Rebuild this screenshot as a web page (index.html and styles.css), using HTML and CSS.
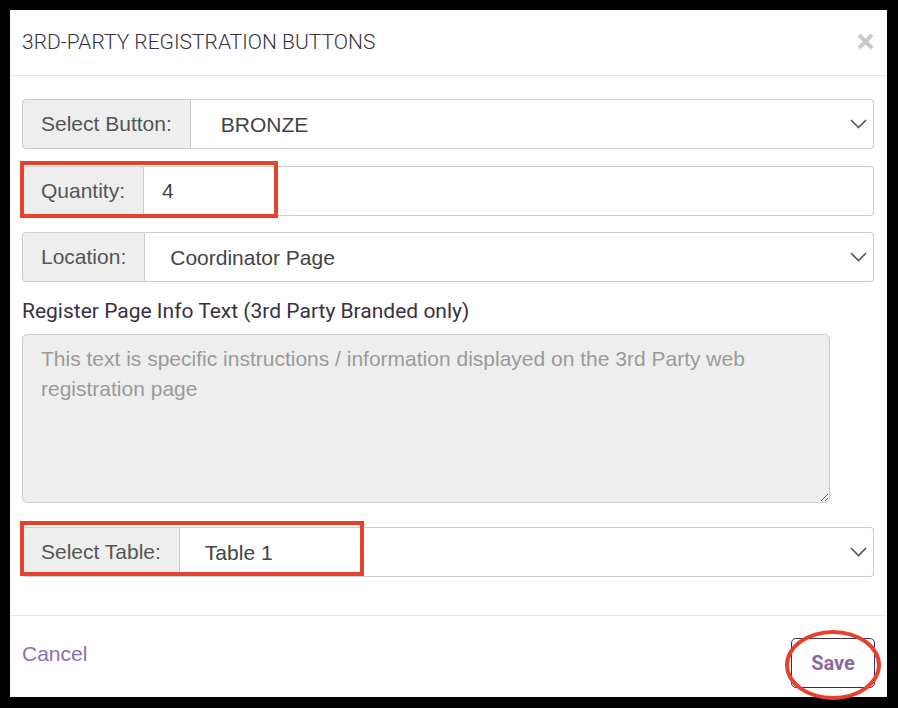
FILE: index.html
```html
<!DOCTYPE html>
<html lang="en">
<head>
    <meta charset="UTF-8">
    <meta name="viewport" content="width=device-width, initial-scale=1.0">
    <title>3rd-Party Registration Buttons</title>
    <link rel="stylesheet" href="styles.css">
</head>
<body>
    <div class="modal">
        <!-- 头部 -->
        <div class="modal-header">
            <h4 class="modal-title">3RD-PARTY REGISTRATION BUTTONS</h4>
            <button class="close" type="button" aria-label="Close">
                <svg width="17" height="17" viewBox="0 0 17 17">
                    <path d="M2 2 L15 15 M15 2 L2 15" stroke="#c9c9c9" stroke-width="4" fill="none"/>
                </svg>
            </button>
        </div>

        <div class="modal-body">
            <div class="field">
                <span class="addon">Select Button:</span>
                <div class="control">
                    <select class="select wide">
                        <option>BRONZE</option>
                    </select>
                    <svg class="chevron" width="17" height="10" viewBox="0 0 17 10">
                        <path d="M1 1 L8.5 8.5 L16 1" stroke="#555" stroke-width="1.6" fill="none"/>
                    </svg>
                </div>
            </div>

            <div class="field">
                <span class="addon">Quantity:</span>
                <div class="control">
                    <input class="input" type="text" value="4">
                </div>
                <!-- 标注框 -->
                <span class="mark mark-qty"></span>
            </div>

            <div class="field">
                <span class="addon">Location:</span>
                <div class="control">
                    <select class="select">
                        <option>Coordinator Page</option>
                    </select>
                    <svg class="chevron" width="17" height="10" viewBox="0 0 17 10">
                        <path d="M1 1 L8.5 8.5 L16 1" stroke="#555" stroke-width="1.6" fill="none"/>
                    </svg>
                </div>
            </div>

            <label class="info-label" for="info">Register Page Info Text (3rd Party Branded only)</label>
            <textarea id="info" class="info" placeholder="This text is specific instructions / information displayed on the 3rd Party web registration page"></textarea>

            <div class="field field-last">
                <span class="addon">Select Table:</span>
                <div class="control">
                    <select class="select">
                        <option>Table 1</option>
                    </select>
                    <svg class="chevron" width="17" height="10" viewBox="0 0 17 10">
                        <path d="M1 1 L8.5 8.5 L16 1" stroke="#555" stroke-width="1.6" fill="none"/>
                    </svg>
                </div>
                <span class="mark mark-table"></span>
            </div>
        </div>

        <div class="modal-footer">
            <a class="cancel" href="javascript:;">Cancel</a>
            <button class="save" type="button">
                Save
                <span class="mark-circle"></span>
            </button>
        </div>
    </div>
</body>
</html>
```

FILE: styles.css
```css
body {
    margin: 0;
    padding: 10px 11px 11px 10px;
    background-color: #000;
}
.modal {
    width: 877px;
    height: 687px;
    background-color: #fff;
    display: flex;
    flex-direction: column;
}
.modal-header {
    height: 66px;
    border-bottom: 1px solid #e5e5e5;
    display: flex;
    align-items: center;
    justify-content: space-between;
    padding: 0 13px 2px 12px;
    box-sizing: border-box;
}
.modal-title {
    margin: 0;
    font-family: Roboto, "Liberation Sans", sans-serif;
    font-weight: 300;
    font-size: 21px;
    color: #3b3043;
}
.close {
    border: 0;
    background: none;
    padding: 0;
    width: 17px;
    height: 17px;
}
.close svg {
    display: block;
}

.modal-body {
    flex: 1;
    padding: 23px 13px 0 12px;
    border-bottom: 1px solid #e5e5e5;
    font-family: "Liberation Sans", Arial, sans-serif;
}

/* 输入组 */
.field {
    display: flex;
    height: 50px;
    margin-bottom: 16px;
    position: relative;
}
.field:first-child {
    margin-bottom: 17px;
}
.addon {
    display: flex;
    align-items: center;
    padding: 0 18px;
    background-color: #eee;
    border: 1px solid #ccc;
    border-radius: 4px 0 0 4px;
    font-size: 21px;
    color: #555;
    white-space: nowrap;
}
.control {
    flex: 1;
    position: relative;
    display: flex;
}
.input,
.select {
    flex: 1;
    width: 100%;
    margin: 0;
    border: 1px solid #ccc;
    border-left: 0;
    border-radius: 0 4px 4px 0;
    background-color: #fff;
    font-family: "Liberation Sans", Arial, sans-serif;
    font-size: 21px;
    color: #444;
    outline: none;
}
.input {
    padding: 0 18px;
}
.select {
    -webkit-appearance: none;
    appearance: none;
    padding: 0 40px 0 25px;
}
.select.wide {
    padding-left: 30px;
}
.chevron {
    position: absolute;
    right: 7px;
    top: 20px;
    pointer-events: none;
}

.info-label {
    display: block;
    margin-top: 17px;
    font-family: Roboto, "Liberation Sans", sans-serif;
    font-size: 21px;
    line-height: 24px;
    color: #3b3043;
}
.info {
    display: block;
    box-sizing: border-box;
    width: 808px;
    height: 169px;
    margin: 11px 0 24px;
    padding: 9px 18px;
    background-color: #eee;
    border: 1px solid #ccc;
    border-radius: 5px;
    font-family: "Liberation Sans", Arial, sans-serif;
    font-size: 21px;
    line-height: 30px;
    color: #555;
    resize: vertical;
}
.info::placeholder {
    color: #9a9a9a;
}

.modal-footer {
    height: 81px;
    box-sizing: border-box;
    padding: 22px 12px 0;
    display: flex;
    justify-content: space-between;
    align-items: flex-start;
}
.cancel {
    margin-top: 4px;
    font-family: "Liberation Sans", Arial, sans-serif;
    font-size: 21px;
    line-height: 24px;
    color: #8d6fa8;
    text-decoration: none;
}
.save {
    position: relative;
    width: 84px;
    height: 50px;
    border: 1px solid #3b3050;
    border-radius: 5px;
    background-color: #fff;
    font-family: Roboto, "Liberation Sans", sans-serif;
    font-weight: 700;
    font-size: 20px;
    color: #8a6aa6;
    padding: 0;
}

/* 红色标注 */
.mark,
.mark-circle {
    position: absolute;
    box-sizing: border-box;
    border: 4px solid #e8412b;
    pointer-events: none;
}
.mark-qty {
    left: -2px;
    top: -5px;
    width: 258px;
    height: 57px;
}
.mark-table {
    left: -2px;
    top: -6px;
    width: 344px;
    height: 55px;
}
.mark-circle {
    left: -7px;
    top: -9px;
    width: 96px;
    height: 70px;
    border-radius: 50%;
}
```
